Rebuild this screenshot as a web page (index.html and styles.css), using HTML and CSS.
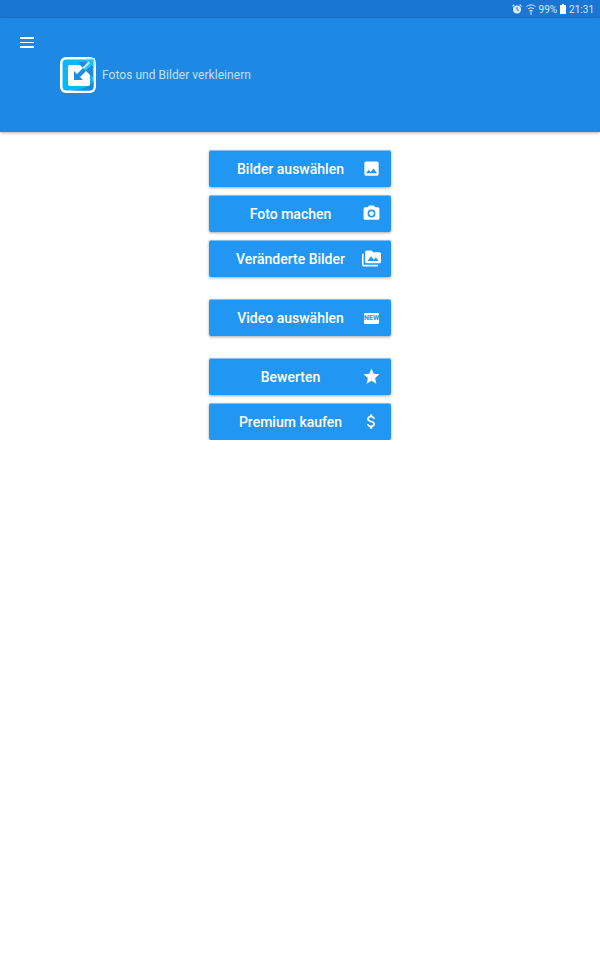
FILE: index.html
```html
<!DOCTYPE html>
<html lang="de">
<head>
    <meta charset="UTF-8">
    <title>Fotos und Bilder verkleinern</title>
    <link rel="stylesheet" href="styles.css">
</head>
<body>
<div class="status">
    <svg class="st-icon alarm" width="10" height="10" viewBox="0 0 10 10"><circle cx="5" cy="5.400" r="4" fill="#dbe8f8"/><path d="M5 3v2.600l1.600 1" stroke="#1976d2" fill="none"/><path d="M.5 2.400L2.400.6M9.500 2.400L7.600.6" stroke="#dbe8f8" stroke-width="1.200"/></svg>
    <svg class="st-icon wifi" width="10" height="11" viewBox="0 0 10 11"><path d="M.5 2.500Q5-.8 9.500 2.500M2 4.700Q5 2.600 8 4.700M3.400 6.800Q5 5.800 6.600 6.800" stroke="#dbe8f8" fill="none"/><path d="M5 7v4" stroke="#dbe8f8"/></svg>
    <span class="st-text pct">99%</span>
    <svg class="st-icon batt" width="6" height="10" viewBox="0 0 6 10"><path d="M2 0h2v1h2v9H0V1h2z" fill="#fff"/></svg>
    <span class="st-text">21:31</span>
</div>
<header class="top">
    <div class="menu"><span></span><span></span><span></span></div>
    <div class="brand">
        <svg class="logo" width="36" height="36" viewBox="0 0 36 36">
            <rect width="36" height="36" rx="6" fill="#fff"/>
            <rect x="2.500" y="2.500" width="31" height="31" rx="4" fill="#13b4f3"/>
            <path d="M33.500 24v5.500a4 4 0 0 1-4 4H12q15-1 21.500-9.500z" fill="#1e88e5"/>
            <path d="M20 5h13v14h-3L19 8z" fill="#1e88e5"/>
            <path d="M10 8h10l10 10v9a2 2 0 0 1-2 2H10a2 2 0 0 1-2-2V10a2 2 0 0 1 2-2z" fill="#fff"/>
            <path d="M25 1h10v10l-3.500-3.500-7.500 7.500-3-3 7.500-7.500z" fill="#c4effd"/>
            <path d="M26.500 2.500h7v7l-2-2-7.500 7.500-1.500-1.500 7.500-7.500z" fill="#14c4f8"/>
            <path d="M14 14v9h9l-3-3 6-6-3-3-6 6z" fill="#1c8ee6"/>
        </svg>
        <span class="title">Fotos und Bilder verkleinern</span>
    </div>
</header>
<main class="buttons">
    <div class="group">
        <a class="btn"><span class="label">Bilder auswählen</span>
            <svg class="ico" viewBox="0 0 24 24"><path d="M21 19V5a2 2 0 0 0-2-2H5a2 2 0 0 0-2 2v14a2 2 0 0 0 2 2h14a2 2 0 0 0 2-2zM8.500 13.500l2.500 3 3.500-4.500 4.500 6H5z" fill="#fff" fill-rule="evenodd"/></svg></a>
        <a class="btn"><span class="label">Foto machen</span>
            <svg class="ico" viewBox="0 0 24 24"><path d="M9 2L7.170 4H4a2 2 0 0 0-2 2v12a2 2 0 0 0 2 2h16a2 2 0 0 0 2-2V6a2 2 0 0 0-2-2h-3.170L15 2zm3 15a5 5 0 1 1 0-10 5 5 0 0 1 0 10zm0-2a3 3 0 1 0 0-6 3 3 0 0 0 0 6z" fill="#fff" fill-rule="evenodd"/></svg></a>
        <a class="btn"><span class="label">Veränderte Bilder</span>
            <svg class="ico" viewBox="0 0 24 24"><path d="M2 6H0v14a2 2 0 0 0 2 2h18v-2H2zM22 4h-8l-2-2H6a2 2 0 0 0-2 2v12a2 2 0 0 0 2 2h16a2 2 0 0 0 2-2V6a2 2 0 0 0-2-2zM7 15l4.500-6 3.500 4.500 2.500-3L21 15z" fill="#fff" fill-rule="evenodd"/></svg></a>
    </div>
    <div class="group">
        <a class="btn"><span class="label">Video auswählen</span>
            <span class="new">NEW</span></a>
    </div>
    <div class="group">
        <a class="btn"><span class="label">Bewerten</span>
            <svg class="ico" viewBox="0 0 24 24"><path d="M12 17.270L18.180 21l-1.640-7.030L22 9.240l-7.190-.61L12 2 9.190 8.630 2 9.240l5.460 4.730L5.820 21z" fill="#fff"/></svg></a>
        <a class="btn"><span class="label">Premium kaufen</span>
            <svg class="ico" viewBox="0 0 24 24"><path d="M11.800 10.900c-2.270-.59-3-1.200-3-2.150 0-1.090 1.010-1.850 2.700-1.850 1.780 0 2.440.85 2.500 2.100h2.210c-.07-1.720-1.120-3.300-3.210-3.810V3h-3v2.160c-1.940.42-3.500 1.680-3.500 3.610 0 2.310 1.910 3.460 4.700 4.130 2.500.6 3 1.480 3 2.410 0 .69-.49 1.790-2.700 1.790-2.060 0-2.870-.92-2.980-2.100h-2.200c.12 2.190 1.760 3.420 3.680 3.830V21h3v-2.150c1.950-.37 3.500-1.500 3.500-3.550 0-2.840-2.430-3.810-4.700-4.400z" fill="#fff"/></svg></a>
    </div>
</main>
</body>
</html>
```

FILE: styles.css
```css
body{
    margin: 0;
    background: #fff;
    font-family: Roboto, "Liberation Sans", sans-serif;
}
.status{
    height: 18px;
    background: #1976d2;
    display: flex;
    align-items: center;
    justify-content: flex-end;
    padding-right: 6px;
}
.st-icon{
    display: block;
}
.st-icon.alarm{
    margin-right: 4px;
}
.st-icon.wifi{
    margin-right: 3px;
}
.st-icon.batt{
    margin-right: 3px;
}
.st-text{
    font-size: 10px;
    color: #dbe8f8;
}
.pct{
    margin-right: 3px;
}
.top{
    height: 114px;
    background: #1e88e5;
    box-shadow: 0 1px 3px rgba(0,0,0,.3);
    padding: 19px 0 0 20px;
    box-sizing: border-box;
}
.menu{
    width: 14px;
    display: flex;
    flex-direction: column;
    gap: 3px;
}
.menu span{
    display: block;
    height: 1.5px;
    background: #fff;
}
.brand{
    display: flex;
    align-items: center;
    margin: 9.5px 0 0 40px;
}
.logo{
    display: block;
}
.title{
    margin-left: 6px;
    font-size: 12px;
    letter-spacing: .04px;
    color: #c4e0fb;
}
.buttons{
    padding-top: 18px;
    display: flex;
    flex-direction: column;
    align-items: center;
    gap: 22px;
}
.group{
    display: flex;
    flex-direction: column;
    gap: 8px;
}
.btn{
    width: 182px;
    height: 37px;
    box-sizing: border-box;
    padding: 0 10px;
    display: flex;
    align-items: center;
    background: #2196f3;
    border-top: 1px solid #7cc1f8;
    border-radius: 2px;
    box-shadow: 0 1px 3px rgba(0,0,0,.35);
    color: #fff;
}
.label{
    flex: 1;
    text-align: center;
    font-size: 14px;
    font-weight: 500;
}
.ico{
    display: block;
    width: 19px;
    height: 19px;
    margin-bottom: 2px;
    flex: none;
}
.new{
    width: 15px;
    height: 11px;
    margin-right: 2px;
    margin-left: 2px;
    background: #fff;
    border-radius: 1px;
    color: #2196f3;
    font-size: 7px;
    font-weight: 700;
    line-height: 11px;
    text-align: center;
}
```
